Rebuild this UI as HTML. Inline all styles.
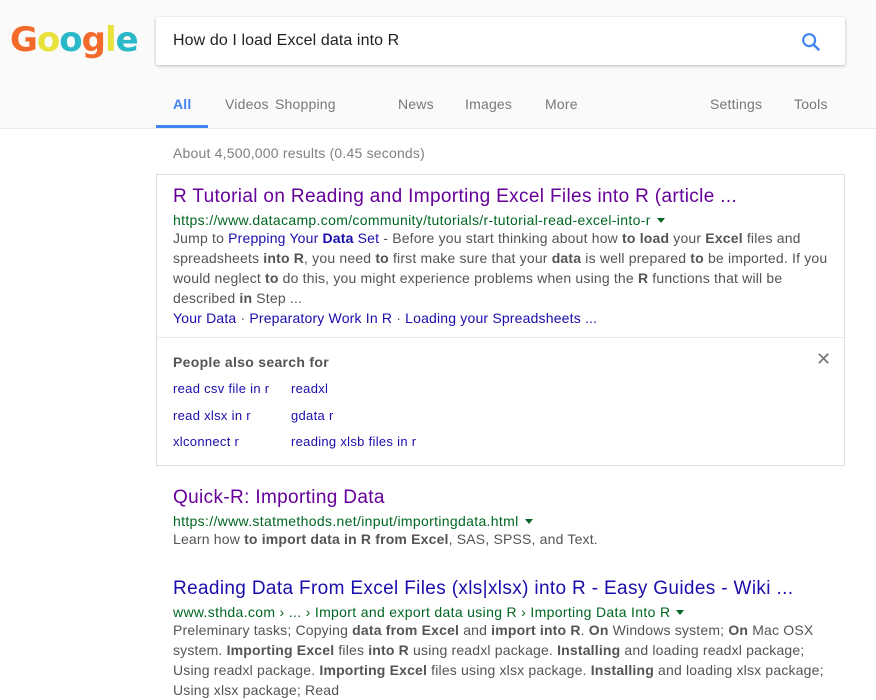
<!DOCTYPE html><html><head><meta charset="utf-8"><style>
body{margin:0;width:876px;height:688px;overflow:hidden;background:#fff;font-family:"Liberation Sans",Arial,sans-serif;position:relative}
.hdr{position:absolute;left:0;top:0;width:876px;height:128px;background:#fafafa;border-bottom:1px solid #ebebeb}
.abs{position:absolute;white-space:nowrap}
.sb{position:absolute;left:156px;top:17px;width:689px;height:48px;background:#fff;box-shadow:0 1px 3px rgba(0,0,0,.25);border-radius:2px}
.tab{font-size:14px;color:#777;top:96px;letter-spacing:0.2px}
.t{font-size:19px;color:#660099;letter-spacing:0.35px}
.u{font-size:14px;color:#006621;letter-spacing:0.33px}
.s{font-size:14px;color:#545454;line-height:20px;letter-spacing:0.18px}
.s b{color:#545454}
.p{font-size:13px;letter-spacing:0.3px}
a,.l{color:#1a0dab;text-decoration:none}
.tri{display:inline-block;border-left:4px solid transparent;border-right:4px solid transparent;border-top:5px solid #006621;margin-left:6px;vertical-align:2px}
</style></head><body>
<div class="hdr"></div>
<div class="abs" style="left:10px;top:20px;font-size:34px;font-weight:bold;letter-spacing:-1px;font-family:'DejaVu Sans',sans-serif">
<span style="color:#f26b2a">G</span><span style="color:#e9e23a">o</span><span style="color:#2bb8c8">o</span><span style="color:#f26b2a">g</span><span style="color:#e9e23a">l</span><span style="color:#2bb8c8">e</span></div>
<div class="sb"><span class="abs" style="left:17px;top:15px;font-size:16px;color:#222;letter-spacing:0.1px">How do I load Excel data into R</span>
<svg class="abs" style="left:644px;top:14px" width="22" height="22" viewBox="0 0 24 24"><circle cx="10" cy="10" r="6.5" fill="none" stroke="#4285f4" stroke-width="2.4"/><path d="M15 15l6 6" stroke="#4285f4" stroke-width="2.8"/></svg></div>
<span class="abs tab" style="left:173px;font-weight:bold;color:#4285f4">All</span>
<div class="abs" style="left:156px;top:125px;width:52px;height:3px;background:#4285f4"></div>
<span class="abs tab" style="left:225px">Videos</span>
<span class="abs tab" style="left:275px">Shopping</span>
<span class="abs tab" style="left:398px">News</span>
<span class="abs tab" style="left:465px">Images</span>
<span class="abs tab" style="left:545px">More</span>
<span class="abs tab" style="left:710px">Settings</span>
<span class="abs tab" style="left:794px">Tools</span>
<span class="abs" style="left:173px;top:145px;font-size:14px;color:#808080;letter-spacing:0.2px">About 4,500,000 results (0.45 seconds)</span>
<div class="abs" style="left:156px;top:174px;width:687px;height:290px;border:1px solid #dfdfdf"></div>
<div class="abs" style="left:157px;top:337px;width:687px;height:1px;background:#ebebeb"></div>
<span class="abs t" style="left:173px;top:186px">R Tutorial on Reading and Importing Excel Files into R (article ...</span>
<span class="abs u" style="left:173px;top:212px">https://www.datacamp.com/community/tutorials/r-tutorial-read-excel-into-r<i class="tri"></i></span>
<div class="abs s" style="left:173px;top:228px;white-space:normal;width:660px">Jump to <span class="l">Prepping Your <b style="color:#1a0dab">Data</b> Set</span> - Before you start thinking about how <b>to load</b> your <b>Excel</b> files and spreadsheets <b>into R</b>, you need <b>to</b> first make sure that your <b>data</b> is well prepared <b>to</b> be imported. If you<br>would neglect <b>to</b> do this, you might experience problems when using the <b>R</b> functions that will be<br>described <b>in</b> Step ...</div>
<span class="abs s" style="left:173px;top:308px"><span class="l">Your Data</span> · <span class="l">Preparatory Work In R</span> · <span class="l">Loading your Spreadsheets ...</span></span>
<span class="abs" style="left:173px;top:354px;font-size:14px;font-weight:bold;color:#545454;letter-spacing:0.3px">People also search for</span>
<span class="abs" style="left:816px;top:349px;font-size:18px;color:#777">✕</span>
<span class="abs l p" style="left:173px;top:381px">read csv file in r</span>
<span class="abs l p" style="left:291px;top:381px">readxl</span>
<span class="abs l p" style="left:173px;top:408px">read xlsx in r</span>
<span class="abs l p" style="left:291px;top:408px">gdata r</span>
<span class="abs l p" style="left:173px;top:434px">xlconnect r</span>
<span class="abs l p" style="left:291px;top:434px">reading xlsb files in r</span>
<span class="abs t" style="left:173px;top:487px">Quick-R: Importing Data</span>
<span class="abs u" style="left:173px;top:513px">https://www.statmethods.net/input/importingdata.html<i class="tri"></i></span>
<span class="abs s" style="left:173px;top:529px">Learn how <b>to import data in R from Excel</b>, SAS, SPSS, and Text.</span>
<span class="abs t" style="left:173px;top:578px;color:#1a0dab">Reading Data From Excel Files (xls|xlsx) into R - Easy Guides - Wiki ...</span>
<span class="abs u" style="left:173px;top:604px">www.sthda.com › ... › Import and export data using R › Importing Data Into R<i class="tri"></i></span>
<div class="abs s" style="left:173px;top:620px;white-space:normal;width:660px">Preleminary tasks; Copying <b>data from Excel</b> and <b>import into R</b>. <b>On</b> Windows system; <b>On</b> Mac OSX<br>system. <b>Importing Excel</b> files <b>into R</b> using readxl package. <b>Installing</b> and loading readxl package;<br>Using readxl package. <b>Importing Excel</b> files using xlsx package. <b>Installing</b> and loading xlsx package;<br>Using xlsx package; Read</div>
</body></html>
